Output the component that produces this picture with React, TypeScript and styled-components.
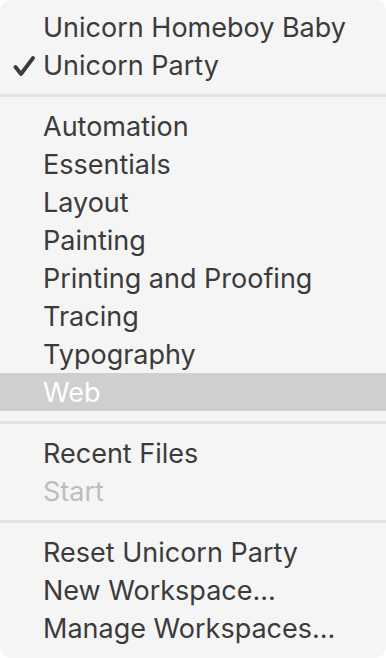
import React from "react";
import styled, { createGlobalStyle } from "styled-components";

const Global = createGlobalStyle`
  html, body { margin: 0; padding: 0; background: #ffffff; }
  body { font-family: "Inter", "Liberation Sans", sans-serif; }
`;

const Menu = styled.div`
  width: 386px;
  height: 658px;
  box-sizing: border-box;
  background: #f5f5f5;
  border-radius: 11px;
  padding: 8px 0 9px;
  display: flex;
  flex-direction: column;
  overflow: hidden;
`;

const Item = styled.div<{ $active?: boolean; $disabled?: boolean }>`
  height: 38px;
  display: flex;
  align-items: center;
  padding-left: 43px;
  position: relative;
  font-size: 27px;
  color: ${(p) => (p.$active ? "#ffffff" : p.$disabled ? "#bdbdbd" : "#3b3b3b")};
  background: ${(p) => (p.$active ? "#cfcfcf" : "transparent")};
  white-space: nowrap;
`;

const Check = styled.svg`
  position: absolute;
  left: 13px;
  top: 10px;
  width: 22px;
  height: 20px;
`;

const Separator = styled.div`
  height: 23px;
  display: flex;
  align-items: center;
  &::after {
    content: "";
    display: block;
    width: 100%;
    height: 3px;
    background: #e4e4e4;
  }
`;

const groups: { label: string; checked?: boolean; active?: boolean; disabled?: boolean }[][] = [
  [{ label: "Unicorn Homeboy Baby" }, { label: "Unicorn Party", checked: true }],
  [
    { label: "Automation" },
    { label: "Essentials" },
    { label: "Layout" },
    { label: "Painting" },
    { label: "Printing and Proofing" },
    { label: "Tracing" },
    { label: "Typography" },
    { label: "Web", active: true },
  ],
  [{ label: "Recent Files" }, { label: "Start", disabled: true }],
  [{ label: "Reset Unicorn Party" }, { label: "New Workspace..." }, { label: "Manage Workspaces..." }],
];

export default function App() {
  return (
    <>
      <Global />
      <Menu>
        {groups.map((g, gi) => (
          <React.Fragment key={gi}>
            {gi > 0 && <Separator />}
            {g.map((it) => (
              <Item key={it.label} $active={it.active} $disabled={it.disabled}>
                {it.checked && (
                  <Check viewBox="0 0 22 20">
                    <path d="M2.5 11 L8 18 L20 2" fill="none" stroke="#3b3b3b" strokeWidth="3.8" strokeLinecap="round" strokeLinejoin="round" />
                  </Check>
                )}
                {it.label}
              </Item>
            ))}
          </React.Fragment>
        ))}
      </Menu>
    </>
  );
}
